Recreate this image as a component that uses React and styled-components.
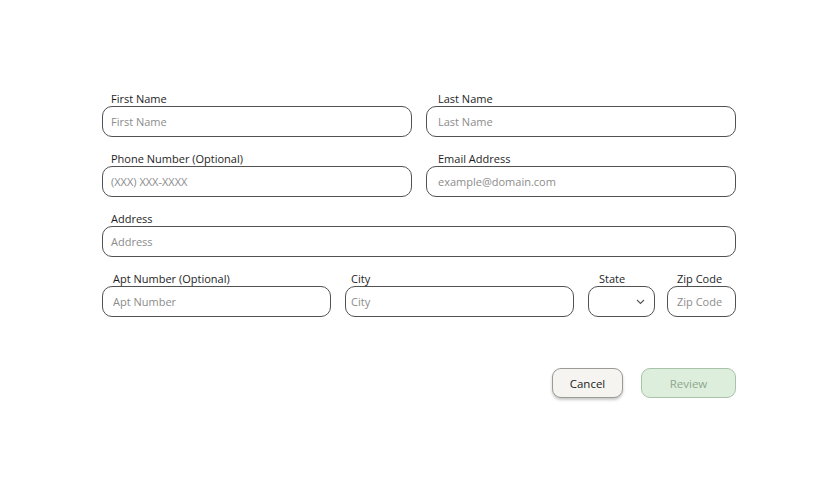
import React from 'react'
import styled, { createGlobalStyle } from 'styled-components'

const GlobalStyle = createGlobalStyle`
  html, body {
    margin: 0;
    padding: 0;
    background: #ffffff;
    font-family: "Open Sans", "Noto Sans", sans-serif;
  }
  * { box-sizing: border-box; }
`

const Page = styled.div`
  width: 839px;
  height: 492px;
  padding: 92px 0 0 102px;
`

const Form = styled.form`
  width: 634px;
  display: flex;
  flex-direction: column;
  gap: 15px;
`

const Row = styled.div`
  display: grid;
  grid-template-columns: ${({ $cols }) => $cols || '1fr 1fr'};
  column-gap: 14px;
`

const Field = styled.label`
  display: flex;
  flex-direction: column;
  min-width: 0;
  margin-left: ${({ $pull }) => ($pull ? -$pull : 0)}px;
`

const LabelText = styled.span`
  font-size: 11px;
  line-height: 14px;
  color: #1e1e1e;
  padding-left: ${({ $indent }) => $indent}px;
`

const Input = styled.input`
  height: 31px;
  width: 100%;
  border: 1px solid #525252;
  border-radius: 10px;
  padding: 0 8px 0 ${({ $indent }) => $indent - 1}px;
  font-family: inherit;
  font-size: 11px;
  color: #333;
  background: #fff;
  outline: none;

  &::placeholder {
    color: #8c8c8c;
  }
`

const SelectBox = styled.div`
  position: relative;
  height: 31px;
  border: 1px solid #525252;
  border-radius: 10px;
  background: #fff;
`

const Chevron = styled.svg`
  position: absolute;
  right: 9px;
  top: 12px;
`

const Actions = styled.div`
  display: flex;
  justify-content: flex-end;
  gap: 18px;
  margin-top: 36px;
`

const Button = styled.button`
  height: 30px;
  width: ${({ $w }) => $w}px;
  border-radius: 9px;
  font-family: inherit;
  font-size: 11.5px;
  cursor: pointer;
  border: 1px solid ${({ $primary }) => ($primary ? '#a9c3a9' : '#9b9b96')};
  background: ${({ $primary }) => ($primary ? '#ddefdc' : '#f5f4f0')};
  color: ${({ $primary }) => ($primary ? '#8fa78f' : '#222')};
  box-shadow: ${({ $primary }) => ($primary ? 'none' : '0 2px 3px rgba(0,0,0,0.22)')};
`

function TextField({ label, placeholder, indent = 9, pull }) {
  return (
    <Field $pull={pull}>
      <LabelText $indent={indent}>{label}</LabelText>
      <Input $indent={indent} placeholder={placeholder} />
    </Field>
  )
}

export default function App() {
  return (
    <>
      <GlobalStyle />
      <Page>
        <Form onSubmit={(e) => e.preventDefault()}>
          <Row>
            <TextField label="First Name" placeholder="First Name" />
            <TextField label="Last Name" placeholder="Last Name" indent={12} />
          </Row>
          <Row>
            <TextField label="Phone Number (Optional)" placeholder="(XXX) XXX-XXXX" />
            <TextField label="Email Address" placeholder="example@domain.com" indent={12} />
          </Row>
          <Row $cols="1fr">
            <TextField label="Address" placeholder="Address" />
          </Row>
          <Row $cols="229px 229px 67px 67px">
            <TextField label="Apt Number (Optional)" placeholder="Apt Number" indent={11} />
            <TextField label="City" placeholder="City" indent={6} />
            <Field>
              <LabelText $indent={11}>State</LabelText>
              <SelectBox>
                <Chevron width="9" height="6" viewBox="0 0 9 6">
                  <path d="M1 1l3.5 3.5L8 1" fill="none" stroke="#555" strokeWidth="1.1" />
                </Chevron>
              </SelectBox>
            </Field>
            <TextField label="Zip Code" placeholder="Zip Code" indent={10} pull={2} />
          </Row>
          <Actions>
            <Button type="button" $w={71}>Cancel</Button>
            <Button type="submit" $w={95} $primary>Review</Button>
          </Actions>
        </Form>
      </Page>
    </>
  )
}
